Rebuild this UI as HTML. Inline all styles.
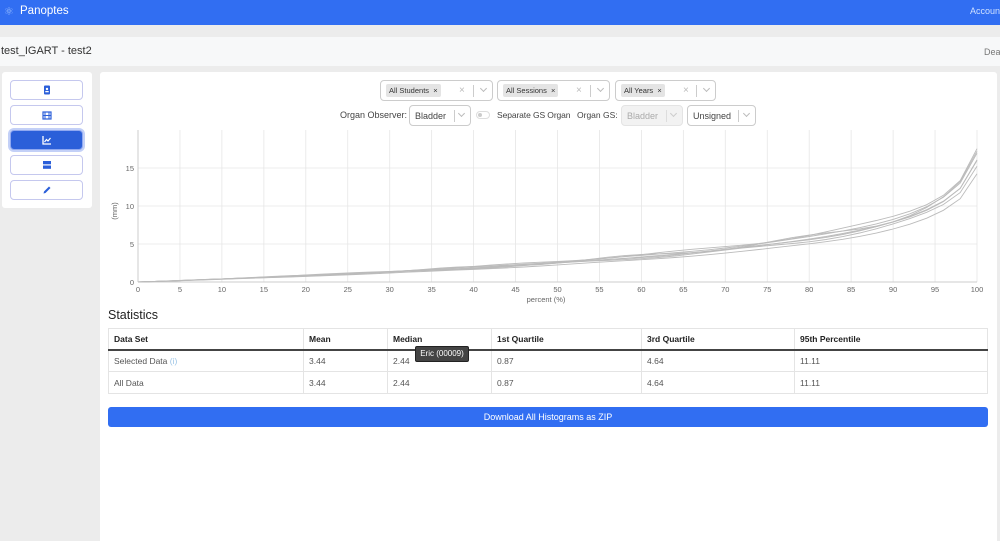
<!DOCTYPE html>
<html><head><meta charset="utf-8"><style>
*{box-sizing:border-box;margin:0;padding:0}
html,body{width:1000px;height:541px;overflow:hidden}
body{background:#ececec;font-family:"Liberation Sans",sans-serif;position:relative;color:#222}
.abs{position:absolute}
.nav{left:0;top:0;width:1000px;height:25px;background:#316ef2}
.sel{position:absolute;height:21px;border:1px solid #ccc;border-radius:4px;background:#fff;font-size:9px;color:#444}
.tag{position:absolute;top:3px;height:13px;background:#e4e4e4;border-radius:2px;font-size:7.5px;line-height:13px;padding:0 3px;color:#333}
.x{position:absolute;top:4px;font-size:10px;color:#bbb}
.sep{position:absolute;top:4px;width:1px;height:12px;background:#ccc}
.chev{position:absolute;top:5px;width:5px;height:5px;border-right:1px solid #bbb;border-bottom:1px solid #bbb;transform:rotate(45deg)}
.sb{position:absolute;left:10px;width:73px;height:20px;border:1px solid #c5c8ee;border-radius:4px;background:#fff}
table{position:absolute;left:108px;top:328px;width:880px;border-collapse:collapse;font-size:8.5px}
td{border:1px solid #e4e4e4;padding:0 5px;height:22px;color:#555}
th{border:1px solid #e4e4e4;border-bottom:2px solid #444;text-align:left;padding:0 5px;height:21px;font-weight:bold;color:#222}
</style></head><body>
<div class="abs nav"></div>
<div class="abs" style="left:4px;top:5px;color:#9cc0ff;font-size:11px">⚛</div>
<div class="abs" style="left:20px;top:5px;color:#fff;font-size:11.5px">Panoptes</div>
<div class="abs" style="left:970px;top:6px;color:#cfe0ff;font-size:9px">Account</div>
<div class="abs" style="left:0;top:37px;width:1000px;height:29px;background:#f7f8f9"></div>
<div class="abs" style="left:1px;top:45px;font-size:11px;color:#333">test_IGART - test2</div>
<div class="abs" style="left:984px;top:47px;font-size:9px;color:#777">Dea</div>

<div class="abs" style="left:2px;top:72px;width:90px;height:136px;background:#fff;border-radius:3px"></div>
<div class="sb" style="top:80px"><svg class="abs" style="left:31px;top:4px" width="10" height="10"><rect x="2" y="0.5" width="6" height="9" rx="1" fill="#2b5fd9"/><circle cx="5" cy="4" r="1.2" fill="#fff"/><rect x="3.3" y="6" width="3.4" height="1.3" fill="#fff"/></svg></div>
<div class="sb" style="top:105px"><svg class="abs" style="left:31px;top:5px" width="10" height="10"><rect x="1" y="1" width="8" height="7" fill="none" stroke="#2b5fd9" stroke-width="1.2"/><line x1="3" y1="1" x2="3" y2="8" stroke="#2b5fd9"/><line x1="7" y1="1" x2="7" y2="8" stroke="#2b5fd9"/><line x1="1" y1="4.5" x2="9" y2="4.5" stroke="#2b5fd9"/></svg></div>
<div class="sb" style="top:130px;background:#2b5fd9;border-color:#8fa8f0;box-shadow:0 0 0 2px #c3d0f7"><svg class="abs" style="left:31px;top:4px" width="10" height="10"><path d="M1 1V9H9" fill="none" stroke="#fff" stroke-width="1.3"/><path d="M2.5 7L4.5 4.5L6 6L8.5 3" fill="none" stroke="#fff" stroke-width="1.2"/></svg></div>
<div class="sb" style="top:155px"><svg class="abs" style="left:31px;top:4px" width="10" height="10"><rect x="1" y="1" width="8" height="3.3" fill="#2b5fd9"/><rect x="1" y="5.5" width="8" height="3.3" fill="#2b5fd9"/></svg></div>
<div class="sb" style="top:180px"><svg class="abs" style="left:31px;top:4px" width="10" height="10"><path d="M1.5 8.5L2 6.5L7 1.5L8.5 3L3.5 8Z" fill="#2b5fd9"/></svg></div>

<div class="abs" style="left:100px;top:72px;width:897px;height:469px;background:#fff;border-radius:3px 3px 0 0"></div>

<div class="sel" style="left:380px;top:80px;width:113px"><span class="tag" style="left:5px">All Students&nbsp; ×</span><span class="x" style="left:78px">×</span><span class="sep" style="left:92px"></span><span class="chev" style="left:100px"></span></div>
<div class="sel" style="left:497px;top:80px;width:113px"><span class="tag" style="left:5px">All Sessions&nbsp; ×</span><span class="x" style="left:78px">×</span><span class="sep" style="left:92px"></span><span class="chev" style="left:100px"></span></div>
<div class="sel" style="left:615px;top:80px;width:101px"><span class="tag" style="left:5px">All Years&nbsp; ×</span><span class="x" style="left:67px">×</span><span class="sep" style="left:80px"></span><span class="chev" style="left:88px"></span></div>

<div class="abs" style="left:340px;top:110px;font-size:9px;color:#444">Organ Observer:</div>
<div class="sel" style="left:409px;top:105px;width:62px"><span class="abs" style="left:5px;top:5px">Bladder</span><span class="sep" style="left:44px"></span><span class="chev" style="left:49px"></span></div>
<div class="abs" style="left:476px;top:111px;width:14px;height:8px;border:1px solid #ddd;border-radius:4px"><div class="abs" style="left:1px;top:1px;width:4px;height:4px;border-radius:50%;background:#ccc"></div></div>
<div class="abs" style="left:497px;top:110px;font-size:8.5px;color:#444;letter-spacing:-0.1px">Separate GS Organ</div>
<div class="abs" style="left:577px;top:110px;font-size:8.5px;color:#444">Organ GS:</div>
<div class="sel" style="left:621px;top:105px;width:62px;background:#f2f2f2;border-color:#e4e4e4;color:#aaa"><span class="abs" style="left:5px;top:5px">Bladder</span><span class="sep" style="left:44px;background:#ddd"></span><span class="chev" style="left:49px;border-color:#ccc"></span></div>
<div class="sel" style="left:687px;top:105px;width:69px"><span class="abs" style="left:5px;top:5px">Unsigned</span><span class="sep" style="left:50px"></span><span class="chev" style="left:56px"></span></div>

<svg class="abs" style="left:0;top:0" width="1000" height="310" id="ch" font-family="Liberation Sans" font-size="7.5" fill="#666"></svg>

<div class="abs" style="left:108px;top:308px;font-size:12.5px;color:#222">Statistics</div>
<table>
<tr><th style="width:195px">Data Set</th><th style="width:84px">Mean</th><th style="width:104px">Median</th><th style="width:150px">1st Quartile</th><th style="width:153px">3rd Quartile</th><th>95th Percentile</th></tr>
<tr><td>Selected Data <span style="color:#9bc4e6">(i)</span></td><td>3.44</td><td>2.44</td><td>0.87</td><td>4.64</td><td>11.11</td></tr>
<tr><td>All Data</td><td>3.44</td><td>2.44</td><td>0.87</td><td>4.64</td><td>11.11</td></tr>
</table>
<div class="abs" style="left:415px;top:346px;width:54px;height:16px;background:#444;border:1px solid #222;border-radius:2px;color:#fff;font-size:8px;line-height:14px;text-align:center">Eric (00009)</div>

<div class="abs" style="left:108px;top:407px;width:880px;height:20px;background:#316ef2;border-radius:3px;color:#fff;font-size:9px;line-height:20px;text-align:center">Download All Histograms as ZIP</div>

<script>
var s='',X=function(p){return 138+p*8.39},Y=function(v){return 282-v*7.6};
for(var p=0;p<=100;p+=5){s+='<line x1="'+X(p)+'" y1="130" x2="'+X(p)+'" y2="282" stroke="#e6e6e6" stroke-width="0.8"/>';s+='<text x="'+X(p)+'" y="292" text-anchor="middle">'+p+'</text>';}
[0,5,10,15].forEach(function(v){s+='<line x1="138" y1="'+Y(v)+'" x2="977" y2="'+Y(v)+'" stroke="#e6e6e6" stroke-width="0.8"/>';s+='<text x="134" y="'+(Y(v)+3)+'" text-anchor="end">'+v+'</text>';});
s+='<line x1="138" y1="282" x2="977" y2="282" stroke="#ccc"/><line x1="138" y1="130" x2="138" y2="282" stroke="#ccc"/>';
s+='<text x="546" y="302" text-anchor="middle">percent (%)</text><text transform="translate(117,211) rotate(-90)" text-anchor="middle">(mm)</text>';
var k=[[1,1,0],[0.92,1.1,0.3],[1.08,0.95,-0.3],[0.97,1.05,0.6],[1.04,0.88,0.1],[0.9,1,0.2],[1.1,1.05,-0.1]];
k.forEach(function(c,i){var d='';for(var p=0;p<=100;p+=2){var v=c[0]*(0.0038*p)+c[1]*3.4*(-Math.log(1-p/101))+c[2]*Math.sin(p*0.3+i)*0.6*(p/100);if(p>5)v=Math.max(v,0);d+=(p?'L':'M')+X(p).toFixed(1)+' '+Y(v).toFixed(1);}s+='<path d="'+d+'" fill="none" stroke="#bbb" stroke-width="0.9"/>';});
document.getElementById('ch').innerHTML=s;
</script>
</body></html>
